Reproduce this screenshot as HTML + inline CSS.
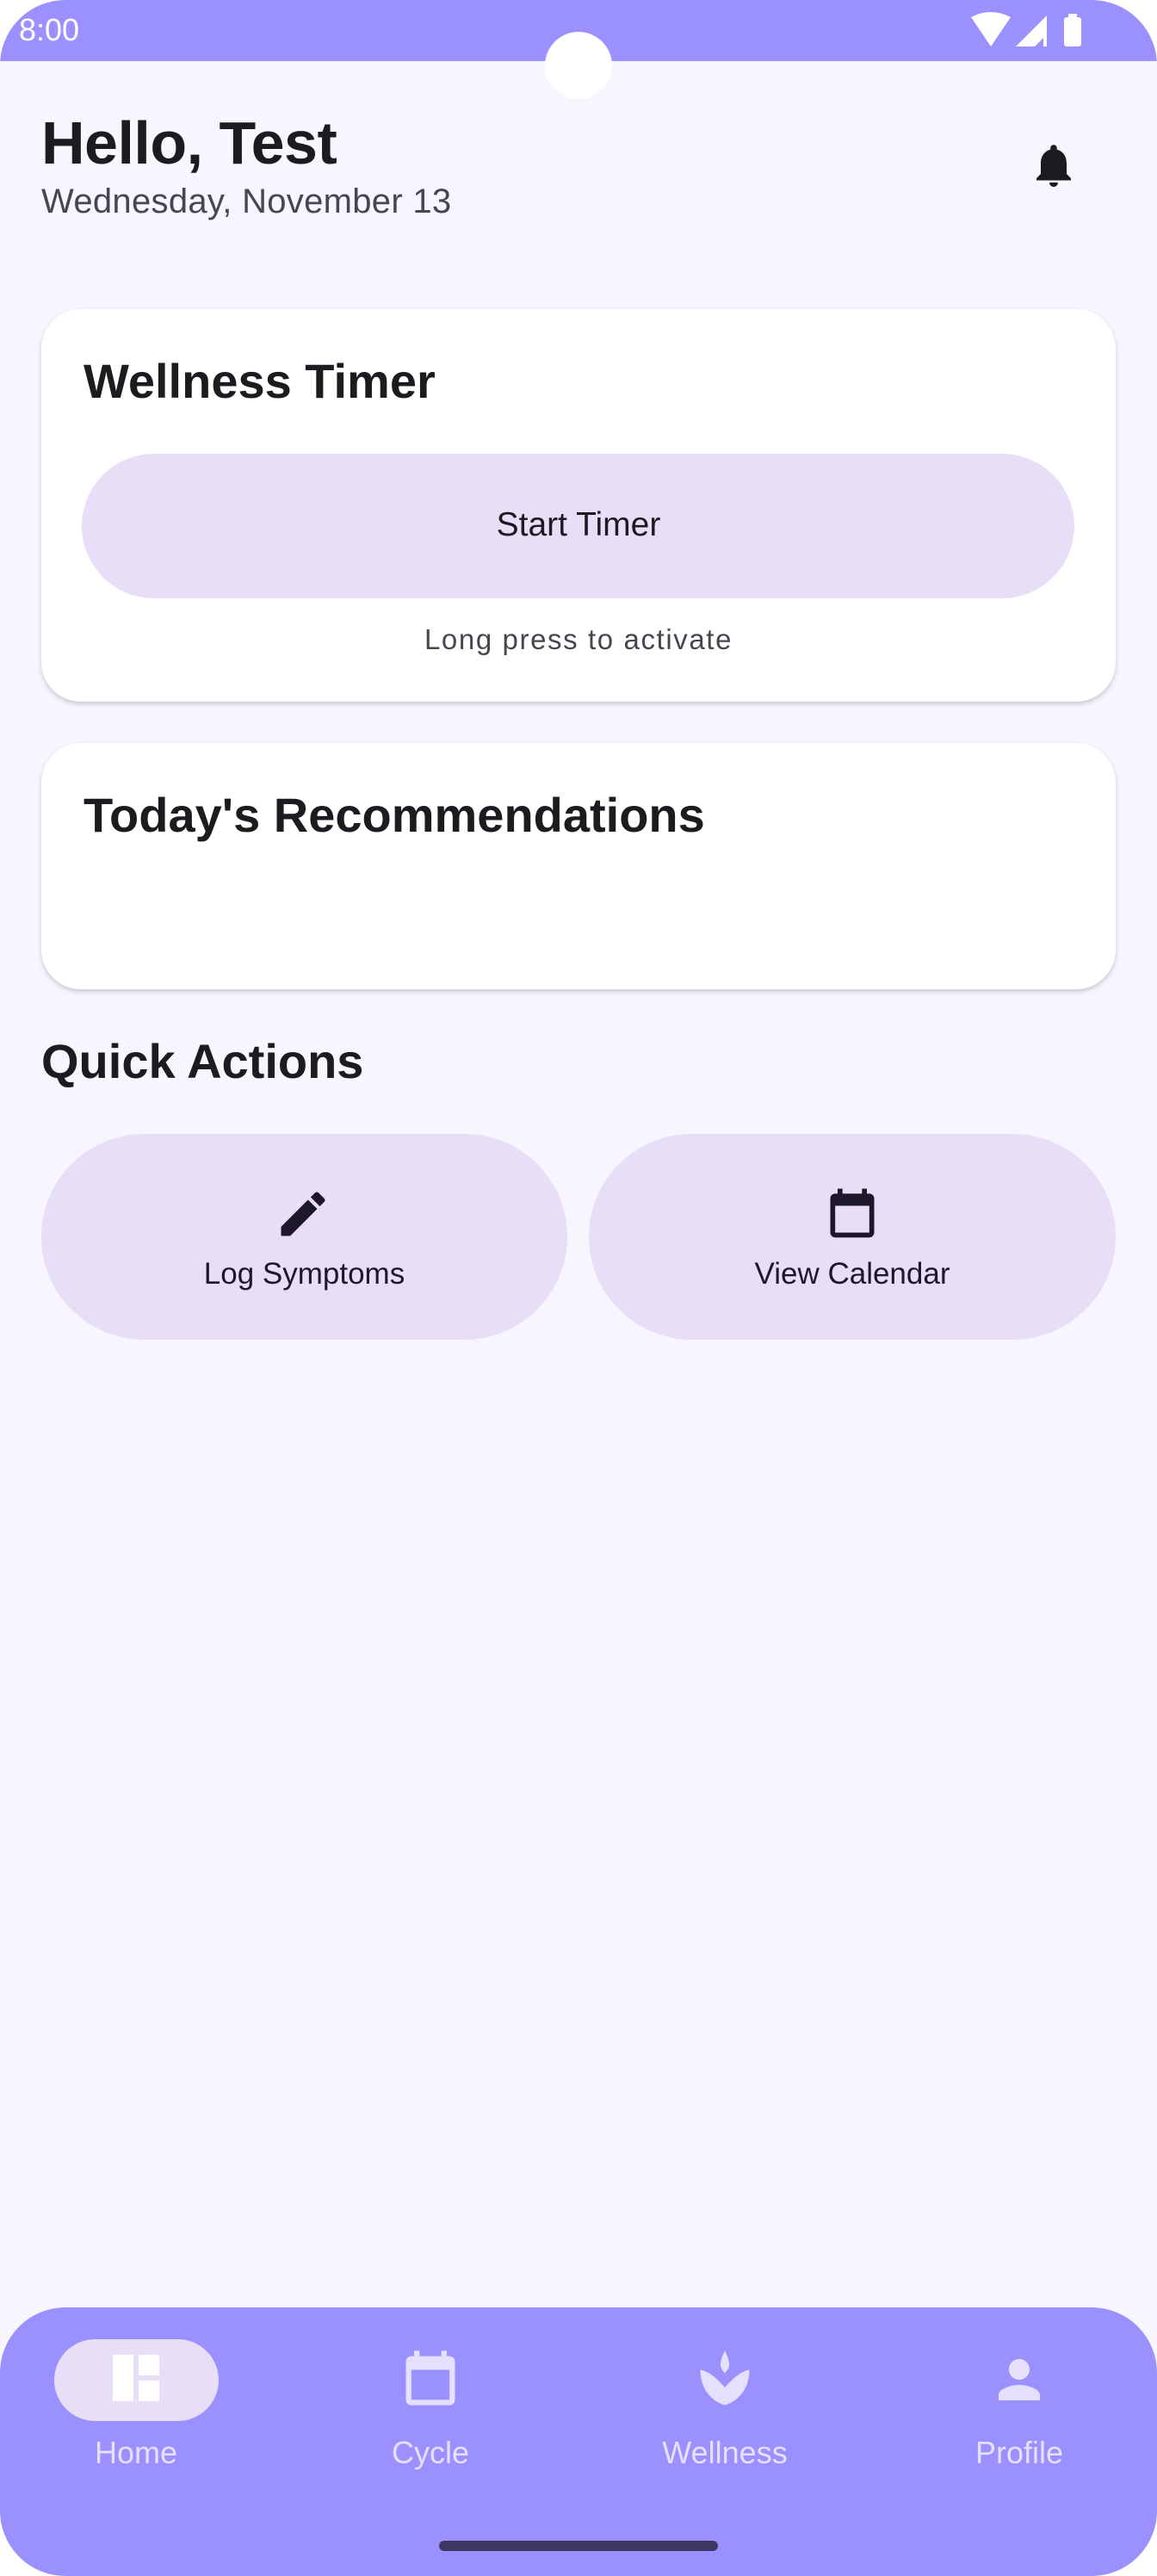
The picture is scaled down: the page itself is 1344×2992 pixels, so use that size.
<!DOCTYPE html>
<html><head><meta charset="utf-8"><style>
*{margin:0;padding:0;box-sizing:border-box}
html,body{width:1344px;height:2992px;overflow:hidden;background:#fff;font-family:"Liberation Sans",sans-serif}
.screen{position:absolute;left:0;top:0;width:1344px;height:2992px;background:#f7f5fe;border-radius:76px;overflow:hidden}
.status{position:absolute;left:0;top:0;width:1344px;height:71px;background:#9a91ff}
.cam{position:absolute;left:633px;top:37px;width:78px;height:78px;border-radius:50%;background:#fff}
.t{position:absolute;white-space:nowrap}
.card{position:absolute;left:48px;width:1248px;background:#fff;border-radius:46px;box-shadow:0 3px 6px rgba(0,0,0,.18)}
.pill{position:absolute;background:#e8def8;border-radius:200px}
.nav{position:absolute;left:0;top:2680px;width:1344px;height:312px;background:#9a91ff;border-radius:76px 76px 0 0}
.lbl{position:absolute;top:2828px;font-size:36px;color:#e6e0ff;transform:translateX(-50%)}
</style></head><body>
<div class="screen">
<div class="status"></div>
<div class="t" style="left:22px;top:14px;font-size:36px;color:#fff">8:00</div>
<svg style="position:absolute;left:1128px;top:14px" width="140" height="42" viewBox="0 0 140 42">
<path d="M0 6 Q23 -6 46 6 L23 40 Z" fill="#fff"/>
<path d="M52 40 L88 4 L88 40 Z" fill="#fff"/><path d="M74 40 L84 30 L84 40Z" fill="#9a91ff"/>
<rect x="108" y="6" width="20" height="34" rx="3" fill="#fff"/><rect x="113" y="2" width="10" height="6" fill="#fff"/>
</svg>
<div class="cam"></div>

<div class="t" style="left:48px;top:126px;font-size:70px;font-weight:bold;color:#1c1b1f;letter-spacing:-0.5px">Hello, Test</div>
<div class="t" style="left:48px;top:212px;font-size:40px;color:#49454f;letter-spacing:0.3px">Wednesday, November 13</div>
<svg style="position:absolute;left:1194px;top:162px" width="60" height="60" viewBox="0 0 24 24"><path fill="#1c1b1f" d="M12 22c1.1 0 2-.9 2-2h-4c0 1.1.89 2 2 2zm6-6v-5c0-3.07-1.64-5.64-4.5-6.32V4c0-.83-.67-1.5-1.5-1.5s-1.5.67-1.5 1.5v.68C7.63 5.36 6 7.92 6 11v5l-2 2v1h16v-1l-2-2z"/></svg>

<div class="card" style="top:359px;height:456px"></div>
<div class="t" style="left:97px;top:410px;font-size:56px;font-weight:bold;color:#1c1b1f">Wellness Timer</div>
<div class="pill" style="left:95px;top:527px;width:1153px;height:168px"></div>
<div class="t" style="left:0;width:1344px;text-align:center;top:588px;font-size:39px;color:#1c1b1f">Start Timer</div>
<div class="t" style="left:0;width:1344px;text-align:center;top:724px;font-size:33px;color:#49454f;letter-spacing:1.6px">Long press to activate</div>

<div class="card" style="top:863px;height:286px"></div>
<div class="t" style="left:97px;top:914px;font-size:56px;font-weight:bold;color:#1c1b1f">Today's Recommendations</div>

<div class="t" style="left:48px;top:1200px;font-size:56px;font-weight:bold;color:#1c1b1f">Quick Actions</div>
<div class="pill" style="left:48px;top:1317px;width:611px;height:239px"></div>
<div class="pill" style="left:684px;top:1317px;width:612px;height:239px"></div>
<svg style="position:absolute;left:318px;top:1376px" width="68" height="68" viewBox="0 0 24 24"><path fill="#1d192b" d="M3 17.25V21h3.75L17.81 9.94l-3.75-3.75L3 17.25zM20.71 7.04a1 1 0 000-1.41l-2.34-2.34a1 1 0 00-1.41 0l-1.83 1.83 3.75 3.75 1.83-1.83z"/></svg>
<svg style="position:absolute;left:956px;top:1375px" width="68" height="68" viewBox="0 0 24 24"><path fill="#1d192b" d="M19 4h-1V2h-2v2H8V2H6v2H5c-1.11 0-2 .9-2 2v14a2 2 0 002 2h14c1.1 0 2-.9 2-2V6c0-1.1-.9-2-2-2zm0 16H5V9h14v11z"/></svg>
<div class="t" style="left:48px;width:611px;text-align:center;top:1460px;font-size:35px;color:#1d192b">Log Symptoms</div>
<div class="t" style="left:684px;width:612px;text-align:center;top:1460px;font-size:35px;color:#1d192b">View Calendar</div>

<div class="nav"></div>
<div style="position:absolute;left:63px;top:2717px;width:191px;height:95px;border-radius:48px;background:#e8def8"></div>
<svg style="position:absolute;left:122px;top:2726px" width="72" height="72" viewBox="0 0 24 24"><path fill="#fff" d="M3 3h8v18H3zM13 3h8v8h-8zM13 13h8v8h-8z"/></svg>
<svg style="position:absolute;left:462px;top:2722px" width="76" height="80" viewBox="0 0 24 24"><path fill="#e6e0ff" d="M19 4h-1V2h-2v2H8V2H6v2H5c-1.11 0-2 .9-2 2v14a2 2 0 002 2h14c1.1 0 2-.9 2-2V6c0-1.1-.9-2-2-2zm0 16H5V9h14v11z"/></svg>
<svg style="position:absolute;left:804px;top:2724px" width="76" height="76" viewBox="0 0 24 24"><path fill="#e6e0ff" d="M12 2c-1 2-1.6 3.6-1.6 5.2 0 1 .6 2 1.6 3 1-1 1.6-2 1.6-3C13.6 5.6 13 4 12 2zM3 9c0 6 3 11 9 13 6-2 9-7 9-13-3 .5-6 3-9 6.5C9 12 6 9.5 3 9z"/></svg>
<svg style="position:absolute;left:1148px;top:2728px" width="72" height="72" viewBox="0 0 24 24"><path fill="#e6e0ff" d="M12 12c2.21 0 4-1.79 4-4s-1.79-4-4-4-4 1.79-4 4 1.79 4 4 4zm0 2c-2.67 0-8 1.34-8 4v2h16v-2c0-2.66-5.33-4-8-4z"/></svg>
<div class="lbl" style="left:158px">Home</div>
<div class="lbl" style="left:500px">Cycle</div>
<div class="lbl" style="left:842px">Wellness</div>
<div class="lbl" style="left:1184px">Profile</div>
<div style="position:absolute;left:510px;top:2951px;width:324px;height:12px;border-radius:6px;background:#3d3763"></div>
</div>
</body></html>
